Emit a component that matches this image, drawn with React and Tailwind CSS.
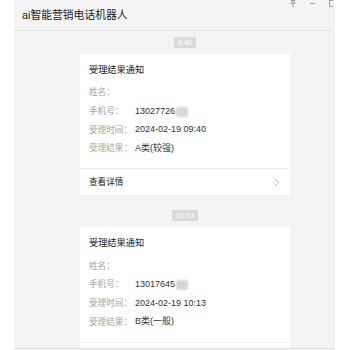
import React from 'react'

const messages = [
    { time: '9:40', phone: '13027726', date: '2024-02-19 09:40', result: 'A类(较强)', gap: 'mt-[6px]' },
    { time: '10:13', phone: '13017645', date: '2024-02-19 10:13', result: 'B类(一般)', gap: 'mt-[15px]' },
]

const Row = ({ label, children }) => (
    <div className="flex h-[18.7px] items-center">
        <span className="w-[46px] shrink-0 text-[8.6px] text-[#a3a3a3]">{label}</span>
        <span className="flex items-center text-[9px] text-[#333]">{children}</span>
    </div>
)

const Card = ({ msg }) => (
    <div className={msg.gap}>
        <div className="flex justify-center">
            <span className="flex h-[10.5px] items-center rounded-[1px] bg-[#dadada] px-[4px] text-[7.5px] leading-none text-white">{msg.time}</span>
        </div>
        <div className="mt-[6px] bg-white">
            <div className="px-[9px] pt-[10px] pb-[10px]">
                <p className="h-[12px] text-[9.2px] leading-[12px] text-[#222]">受理结果通知</p>
                <div className="mt-[8px]">
                    <Row label="姓名："></Row>
                    <Row label="手机号：">
                        {msg.phone}
                        <span className="ml-[1px] inline-block h-[10px] w-[12px] rounded-[2px] bg-[#d6d6d6] blur-[1px]"></span>
                    </Row>
                    <Row label="受理时间：">{msg.date}</Row>
                    <Row label="受理结果：">{msg.result}</Row>
                </div>
            </div>
            <div className="flex h-[27px] items-center justify-between border-t border-[#eeeeee] px-[9px]">
                <span className="text-[8.6px] text-[#222]">查看详情</span>
                <svg width="6" height="9" viewBox="0 0 6 9" className="mr-[1px]">
                    <path d="M1 1l3.5 3.5L1 8" fill="none" stroke="#b5b5b5" strokeWidth="0.9" />
                </svg>
            </div>
        </div>
    </div>
)

export default function App() {
    return (
        <div className="flex h-[350px] w-[350px] overflow-hidden bg-white font-['Liberation_Sans','Noto_Sans_CJK_SC',sans-serif]">
            <div className="w-[14px] shrink-0 bg-white"></div>
            <div className="relative flex w-[320px] shrink-0 flex-col border-r border-[#e9e9e9] bg-[#f4f4f4]">
                <div className="absolute right-[0px] top-[0px] flex items-start gap-[13px] pr-[0px]">
                    <svg width="6" height="7" viewBox="0 0 6 7">
                        <path d="M1 0.5h4M1.8 0.5v2.6M4.2 0.5v2.6M0.5 3.3h5M3 3.3V7" fill="none" stroke="#8a8a8a" strokeWidth="0.8" />
                    </svg>
                    <svg width="7" height="7" viewBox="0 0 7 7">
                        <path d="M1 3.5h5" stroke="#8a8a8a" strokeWidth="0.8" />
                    </svg>
                    <svg width="4" height="7" viewBox="0 0 4 7">
                        <path d="M0.5 0v6.5H4M0.5 0.5H4" fill="none" stroke="#8a8a8a" strokeWidth="0.8" />
                    </svg>
                </div>
                <div className="flex h-[31px] shrink-0 items-center border-b border-[#e6e6e6] pl-[8px]">
                    <h1 className="text-[10.8px] font-normal text-[#1a1a1a]">ai智能营销电话机器人</h1>
                </div>
                <div className="flex-1 overflow-hidden pl-[66px] pr-[43px]">
                    {messages.map((msg) => (
                        <Card key={msg.time} msg={msg} />
                    ))}
                </div>
                <div className="h-[2px] shrink-0 border-t border-[#dcdcdc] bg-[#f4f4f4]"></div>
            </div>
            <div className="flex-1 bg-white"></div>
        </div>
    )
}
